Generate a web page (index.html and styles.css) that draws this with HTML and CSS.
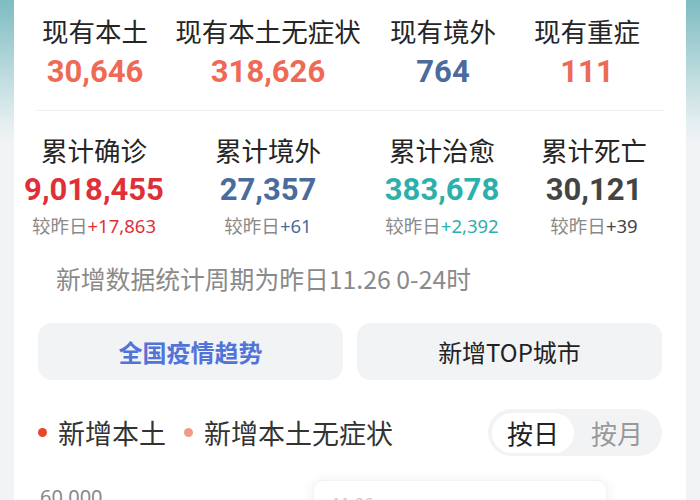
FILE: index.html
```html
<!DOCTYPE html>
<html lang="zh-CN">
<head>
<meta charset="utf-8">
<link rel="stylesheet" href="styles.css">
</head>
<body>
<div class="page">
  <div class="card">
    <div class="stats row1">
      <div class="stat"><div class="label">现有本土</div><div class="num coral">30,646</div></div>
      <div class="stat"><div class="label">现有本土无症状</div><div class="num coral">318,626</div></div>
      <div class="stat"><div class="label">现有境外</div><div class="num blue">764</div></div>
      <div class="stat"><div class="label">现有重症</div><div class="num coral">111</div></div>
    </div>
    <div class="divider"></div>
    <div class="stats row2">
      <div class="stat"><div class="label">累计确诊</div><div class="num red">9,018,455</div><div class="sub">较昨日<span class="red">+17,863</span></div></div>
      <div class="stat"><div class="label">累计境外</div><div class="num blue">27,357</div><div class="sub">较昨日<span class="blue">+61</span></div></div>
      <div class="stat"><div class="label">累计治愈</div><div class="num teal">383,678</div><div class="sub">较昨日<span class="teal">+2,392</span></div></div>
      <div class="stat"><div class="label">累计死亡</div><div class="num dark">30,121</div><div class="sub">较昨日<span class="dark">+39</span></div></div>
    </div>
    <div class="note">新增数据统计周期为昨日11.26 0-24时</div>
    <div class="buttons">
      <div class="btn active">全国疫情趋势</div>
      <div class="btn">新增TOP城市</div>
    </div>
    <div class="legend-row">
      <div class="legend">
        <span class="dot dot-red"></span><span class="legend-text">新增本土</span>
        <span class="dot dot-pink"></span><span class="legend-text">新增本土无症状</span>
      </div>
      <div class="toggle">
        <span class="tog on">按日</span>
        <span class="tog">按月</span>
      </div>
    </div>
    <div class="chart">
      <div class="axis">60,000</div>
      <div class="tooltip"><span class="tip-text">11-26</span></div>
    </div>
  </div>
</div>
</body>
</html>
```

FILE: styles.css
```css
html, body {
  margin: 0;
  padding: 0;
}
body {
  width: 700px;
  height: 500px;
  overflow: hidden;
  background: linear-gradient(to bottom, #7dbcc1 0px, #b9d9dc 70px, #e6eff1 125px, #f2f3f5 145px, #f2f3f5 100%);
  font-family: "Noto Sans CJK SC", "Noto Sans", sans-serif;
  color: #222;
}
.page {
  padding: 0 14px;
  height: 500px;
}
.card {
  background: #fff;
  height: 500px;
  padding: 0 24px;
  box-sizing: border-box;
  overflow: hidden;
}
.stats {
  display: grid;
  margin: 0 -24px;
}
.row1 {
  grid-template-columns: 162px 184px 166px 122px;
  padding-top: 13px;
}
.row2 {
  grid-template-columns: 160px 188px 160px 144px;
  padding-top: 21px;
}
.stat {
  display: flex;
  flex-direction: column;
  align-items: center;
}
.label {
  font-size: 26.5px;
  line-height: 36px;
  color: #252525;
  white-space: nowrap;
}
.num {
  font-family: Roboto, "Noto Sans", sans-serif;
  font-weight: 700;
  font-size: 31px;
  line-height: 38px;
  white-space: nowrap;
  margin-top: 3px;
}
.row1 .num {
  margin-top: 4px;
}
.sub {
  font-size: 18.5px;
  line-height: 30px;
  color: #8a8a8a;
  white-space: nowrap;
  margin-top: 1px;
}
.sub span {
  font-family: "Noto Sans", sans-serif;
}
.coral { color: #ef6a55; }
.blue { color: #4a6b9c; }
.red { color: #df3038; }
.teal { color: #2cb0ab; }
.dark { color: #444; }
.divider {
  height: 1px;
  background: #f0f0f0;
  margin: 19px -2px 0;
}
.note {
  font-size: 24.8px;
  line-height: 32px;
  color: #8a8a8a;
  margin-top: 21px;
  padding-left: 18px;
  white-space: nowrap;
}
.buttons {
  display: flex;
  gap: 14px;
  margin-top: 29px;
}
.btn {
  flex: 1;
  height: 57px;
  background: #f2f3f5;
  border-radius: 14px;
  display: flex;
  align-items: center;
  justify-content: center;
  font-size: 24px;
  color: #222;
}
.btn.active {
  color: #5274d9;
  font-weight: 700;
}
.legend-row {
  display: flex;
  align-items: center;
  justify-content: space-between;
  margin-top: 29px;
}
.legend {
  display: flex;
  align-items: center;
  font-size: 27px;
  color: #333;
}
.dot {
  width: 9px;
  height: 9px;
  border-radius: 50%;
  display: inline-block;
  margin-right: 11px;
}
.dot-red { background: #e5482d; }
.dot-pink { background: #f39b8b; margin-left: 18px; }
.legend-text {
  line-height: 36px;
}
.toggle {
  display: flex;
  align-items: center;
  background: #f2f3f5;
  border-radius: 24px;
  height: 47px;
  padding: 0 4px;
  width: 174px;
  box-sizing: border-box;
}
.tog {
  font-size: 26px;
  color: #999;
  line-height: 40px;
  height: 40px;
  padding: 0 15px;
  border-radius: 20px;
}
.tog.on {
  background: #fff;
  color: #222;
  margin-right: 2px;
}
.chart {
  position: relative;
  height: 80px;
  margin-top: 19px;
}
.axis {
  font-size: 20px;
  color: #888;
  font-family: "Noto Sans", sans-serif;
  padding-top: 8px;
  margin-left: 2px;
}
.tooltip {
  position: absolute;
  left: 275px;
  top: 5px;
  width: 292px;
  height: 80px;
  background: #fff;
  border-radius: 10px;
  box-shadow: 0 2px 14px rgba(0,0,0,0.08);
  border: 1px solid #f3f3f3;
}
.tip-text {
  display: block;
  font-size: 16px;
  color: #ccc;
  padding: 10px 0 0 18px;
}
```
